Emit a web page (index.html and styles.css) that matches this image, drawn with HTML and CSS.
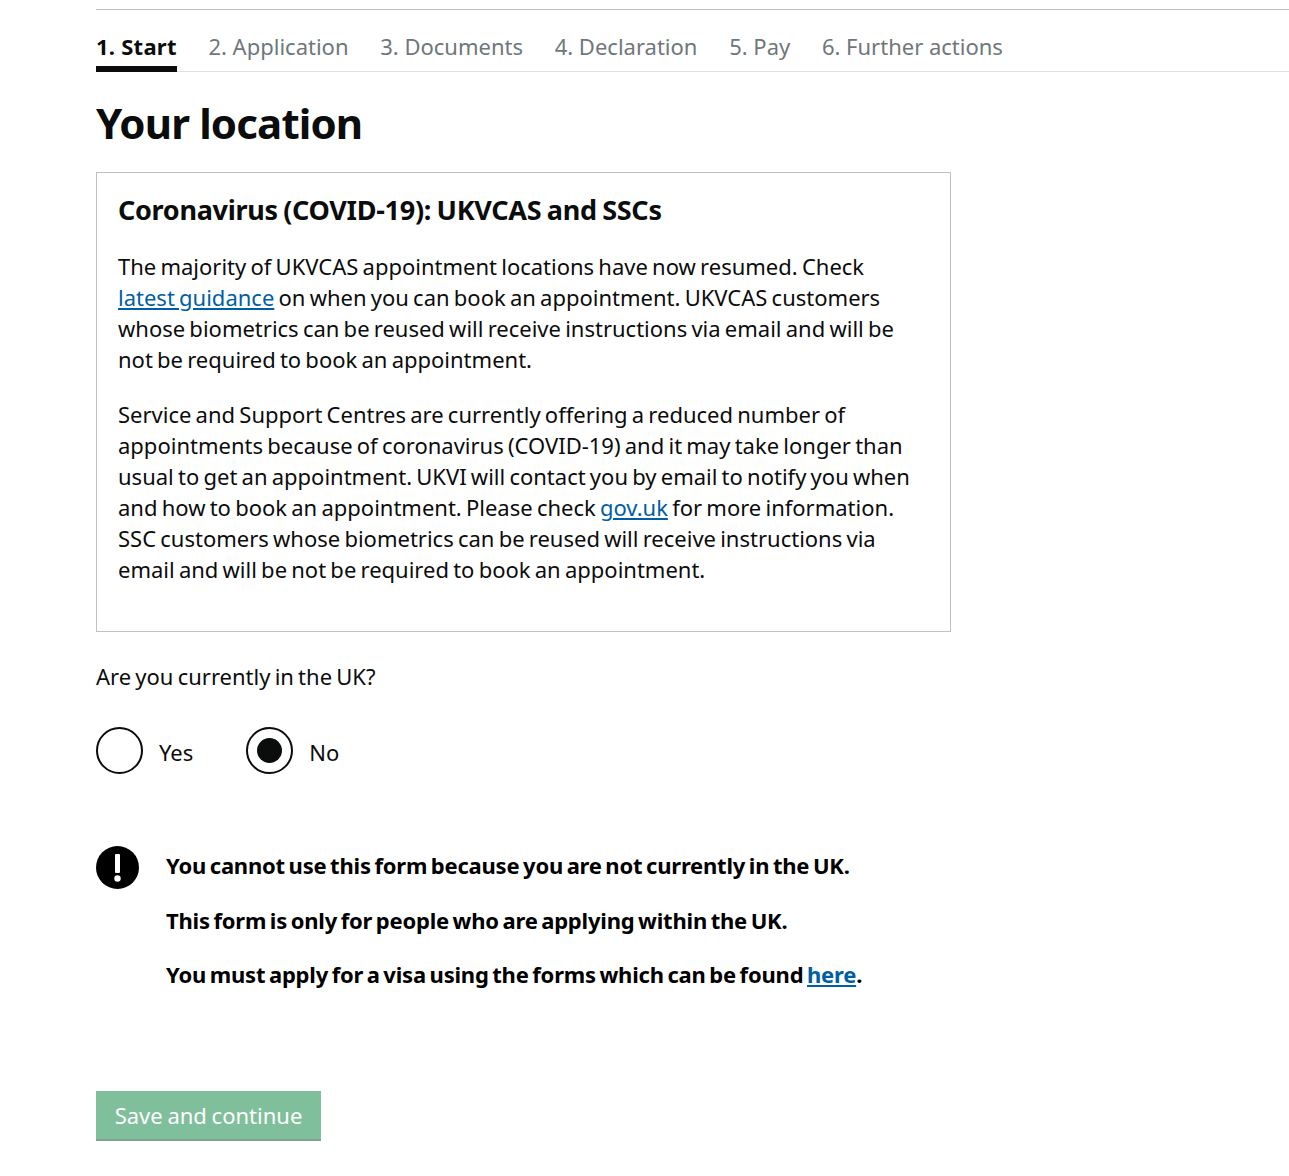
FILE: index.html
```html
<!DOCTYPE html>
<html lang="en">
<head>
<meta charset="utf-8">
<title>Your location</title>
<link rel="stylesheet" href="styles.css">
</head>
<body>
<main class="page">
  <nav class="steps">
    <span class="step step-active">1. Start</span>
    <span class="step">2. Application</span>
    <span class="step">3. Documents</span>
    <span class="step">4. Declaration</span>
    <span class="step">5. Pay</span>
    <span class="step">6. Further actions</span>
  </nav>
  <h1 class="title">Your location</h1>
  <section class="notice">
    <h2 class="notice-title">Coronavirus (COVID-19): UKVCAS and SSCs</h2>
    <p class="para">The majority of UKVCAS appointment locations have now resumed. Check<br><a href="#" class="link">latest guidance</a> on when you can book an appointment. UKVCAS customers<br>whose biometrics can be reused will receive instructions via email and will be<br>not be required to book an appointment.</p>
    <p class="para">Service and Support Centres are currently offering a reduced number of<br>appointments because of coronavirus (COVID-19) and it may take longer than<br>usual to get an appointment. UKVI will contact you by email to notify you when<br>and how to book an appointment. Please check <a href="#" class="link">gov.uk</a> for more information.<br>SSC customers whose biometrics can be reused will receive instructions via<br>email and will be not be required to book an appointment.</p>
  </section>
  <p class="question">Are you currently in the UK?</p>
  <div class="radios">
    <label class="radio"><span class="radio-mark"></span><span class="radio-label">Yes</span></label>
    <label class="radio"><span class="radio-mark radio-on"></span><span class="radio-label">No</span></label>
  </div>
  <div class="warning">
    <svg class="warning-icon" viewBox="0 0 43 43" width="43" height="43" aria-hidden="true">
      <circle cx="21.5" cy="21.5" r="21.5" fill="#000"/>
      <rect x="19" y="8" width="5" height="19" rx="1" fill="#fff"/>
      <circle cx="21.5" cy="32.5" r="3.2" fill="#fff"/>
    </svg>
    <div class="warning-text">
      <p>You cannot use this form because you are not currently in the UK.</p>
      <p>This form is only for people who are applying within the UK.</p>
      <p>You must apply for a visa using the forms which can be found <a href="#" class="link">here</a>.</p>
    </div>
  </div>
  <button class="save" type="button">Save and continue</button>
</main>
</body>
</html>
```
FILE: styles.css
```css
* { box-sizing: border-box; }
html, body { margin: 0; padding: 0; background: #fff; }
body {
  font-family: "Noto Sans", "Open Sans", sans-serif;
  color: #0b0c0c;
  font-size: 22px;
  line-height: 31px;
  word-spacing: -1.5px;
  overflow-x: hidden;
}
.page { padding: 9px 0 25px 96px; width: 1289px; height: 1176px; }
.steps {
  display: flex;
  gap: 31.7px;
  height: 63px;
  border-top: 1px solid #bfc1c3;
  border-bottom: 1px solid #dee0e2;
  font-size: 22px;
  word-spacing: 0;
  color: #6f777b;
}
.step { padding-top: 20px; height: 62px; line-height: 32px; }
.step-active { color: #0b0c0c; font-weight: 700; border-bottom: 6px solid #0b0c0c; letter-spacing: 0.25px; }
.title { margin: 24px 0 22px; font-size: 42px; line-height: 54px; font-weight: 700; color: #0b0c0c; letter-spacing: -0.85px; word-spacing: 0; }
.notice {
  width: 855px;
  height: 460px;
  border: 1px solid #bfc1c3;
  padding: 20px 20px 20px 21px;
}
.notice-title { margin: 0 0 25px; font-size: 27px; line-height: 33px; font-weight: 700; letter-spacing: -0.3px; word-spacing: -1.2px; }
.para { margin: 0 0 24px; white-space: nowrap; }
.link { color: #005ea5; text-decoration: underline; }
.question { margin: 29px 0 0; }
.radios { display: flex; gap: 53px; margin-top: 35px; }
.radio { display: flex; align-items: center; gap: 16px; height: 47px; }
.radio-label { padding-top: 4px; }
.radio-mark { position: relative; width: 47px; height: 47px; border: 2px solid #0b0c0c; border-radius: 50%; }
.radio-on::after {
  content: "";
  position: absolute;
  left: 9px;
  top: 9px;
  width: 25px;
  height: 25px;
  border-radius: 50%;
  background: #0b0c0c;
}
.warning { display: flex; gap: 27px; margin-top: 72px; }
.warning-icon { flex: none; }
.warning-text { font-weight: 700; color: #000; padding-top: 4px; letter-spacing: -0.2px; word-spacing: -1.9px; }
.warning-text p { margin: 0 0 23.5px; line-height: 31px; }
.save {
  display: block;
  margin-top: 77px;
  width: 225px;
  height: 50px;
  padding: 0;
  border: 0;
  border-bottom: 2px solid #7ea28c;
  background: #80bf9b;
  color: #fff;
  font-family: inherit;
  font-size: 22px;
  word-spacing: -1px;
  text-align: center;
}
```
